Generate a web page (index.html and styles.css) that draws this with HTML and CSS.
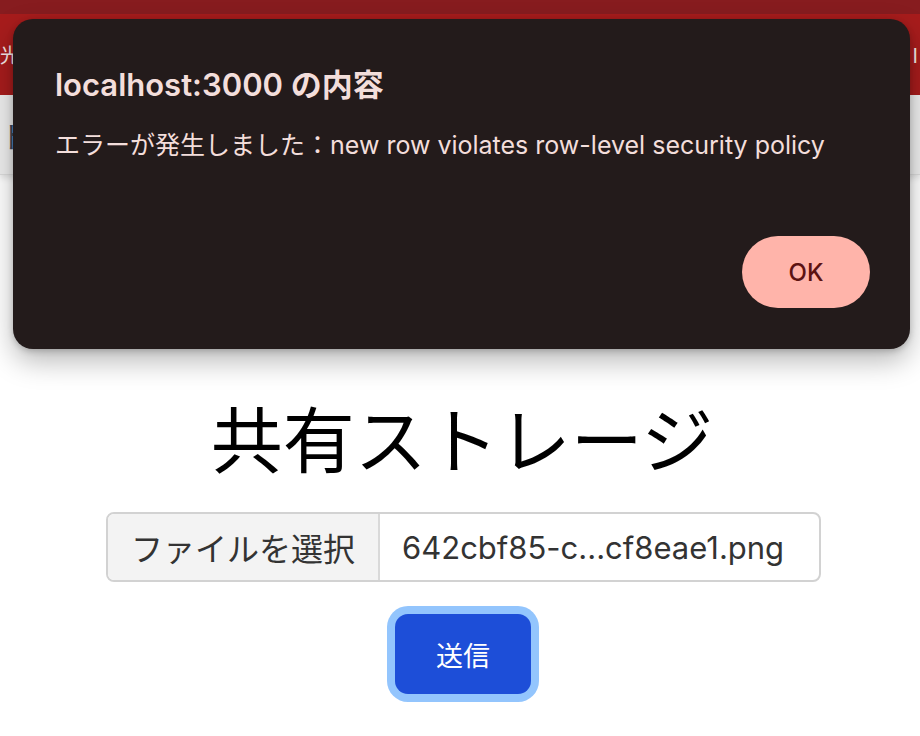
FILE: index.html
```html
<!DOCTYPE html>
<html lang="ja">
<head>
<meta charset="utf-8">
<title>共有ストレージ</title>
<link rel="stylesheet" href="styles.css">
</head>
<body>
<div class="page">
  <header class="site-header">
    <div class="topbar"></div>
    <div class="brandbar">
      <span class="brand">光</span>
      <span class="brand-right">I</span>
    </div>
    <nav class="navbar">
      <span class="nav-item">ト</span>
    </nav>
  </header>
  <main class="main">
    <h1 class="title">共有ストレージ</h1>
    <div class="file-input">
      <span class="file-btn">ファイルを選択</span>
      <span class="file-name">642cbf85-c...cf8eae1.png</span>
    </div>
    <button class="submit" type="button">送信</button>
  </main>
</div>

<div class="dialog" role="alertdialog">
  <div class="dialog-title">localhost:3000 の内容</div>
  <div class="dialog-msg">エラーが発生しました：new row violates row-level security policy</div>
  <div class="dialog-actions">
    <button class="ok-btn" type="button">OK</button>
  </div>
</div>
</body>
</html>
```

FILE: styles.css
```css
* { box-sizing: border-box; }

html, body {
  margin: 0;
  padding: 0;
  background: #ffffff;
  width: 920px;
  height: 736px;
  overflow: hidden;
  font-family: "Noto Sans CJK JP", sans-serif;
}

.page {
  display: flex;
  flex-direction: column;
  height: 736px;
}

.site-header {
  display: flex;
  flex-direction: column;
  box-shadow: 0 3px 6px rgba(0, 0, 0, 0.12);
}

.topbar {
  height: 14px;
  background: #871c1f;
}

.brandbar {
  height: 81px;
  background: #a71c1c;
  display: flex;
  align-items: center;
  justify-content: space-between;
  padding: 0 2px 0 0;
  color: #f4e6e6;
  font-size: 20px;
}

.navbar {
  height: 80px;
  background: #eeeeee;
  display: flex;
  align-items: center;
  border-bottom: 1px solid #dcdcdc;
}

.nav-item {
  margin-left: 0;
  font-size: 30px;
  color: #3b4756;
}

.main {
  display: flex;
  flex-direction: column;
  align-items: center;
  padding-top: 218px;
}

.title {
  margin: 0 0 0 4px;
  font-size: 72px;
  font-weight: 400;
  line-height: 86px;
  color: #000;
}

.file-input {
  margin-top: 33px;
  margin-left: 7px;
  width: 715px;
  height: 70px;
  border: 2px solid #d2d2d2;
  border-radius: 8px;
  display: flex;
  align-items: stretch;
  overflow: hidden;
  font-family: "Inter", "Noto Sans CJK JP", sans-serif;
}

.file-btn {
  width: 272px;
  flex: none;
  background: #f3f3f3;
  border-right: 2px solid #d9d9d9;
  display: flex;
  align-items: center;
  justify-content: center;
  font-family: "Noto Sans CJK JP", sans-serif;
  font-size: 32px;
  color: #333;
}

.file-name {
  display: flex;
  align-items: center;
  padding-left: 22px;
  font-size: 31px;
  color: #333;
}

.submit {
  margin-top: 32px;
  margin-left: 6px;
  width: 136px;
  height: 80px;
  border: none;
  border-radius: 13px;
  background: #1d4ed8;
  color: #ffffff;
  font-family: "Noto Sans CJK JP", sans-serif;
  font-size: 27px;
  box-shadow: 0 0 0 8px #93c5fd;
  padding: 0;
}

.dialog {
  position: absolute;
  left: 13px;
  top: 19px;
  width: 897px;
  height: 330px;
  background: #231b1b;
  border-radius: 20px;
  box-shadow: 0 12px 28px rgba(0, 0, 0, 0.28), 0 2px 6px rgba(0, 0, 0, 0.2);
  padding: 46px 40px 0 42px;
  display: flex;
  flex-direction: column;
  font-family: "Inter", "Noto Sans CJK JP", sans-serif;
  color: #f3dedb;
}

.dialog-title {
  font-size: 31px;
  font-weight: 600;
  line-height: 40px;
}

.dialog-msg {
  margin-top: 22px;
  font-size: 25px;
  line-height: 36px;
}

.dialog-actions {
  display: flex;
  justify-content: flex-end;
  margin-top: 73px;
}

.ok-btn {
  width: 128px;
  height: 72px;
  border: none;
  border-radius: 36px;
  background: #ffb4aa;
  color: #5c1212;
  font-family: "Inter", sans-serif;
  font-size: 24px;
  font-weight: 500;
  padding: 0;
}
```
